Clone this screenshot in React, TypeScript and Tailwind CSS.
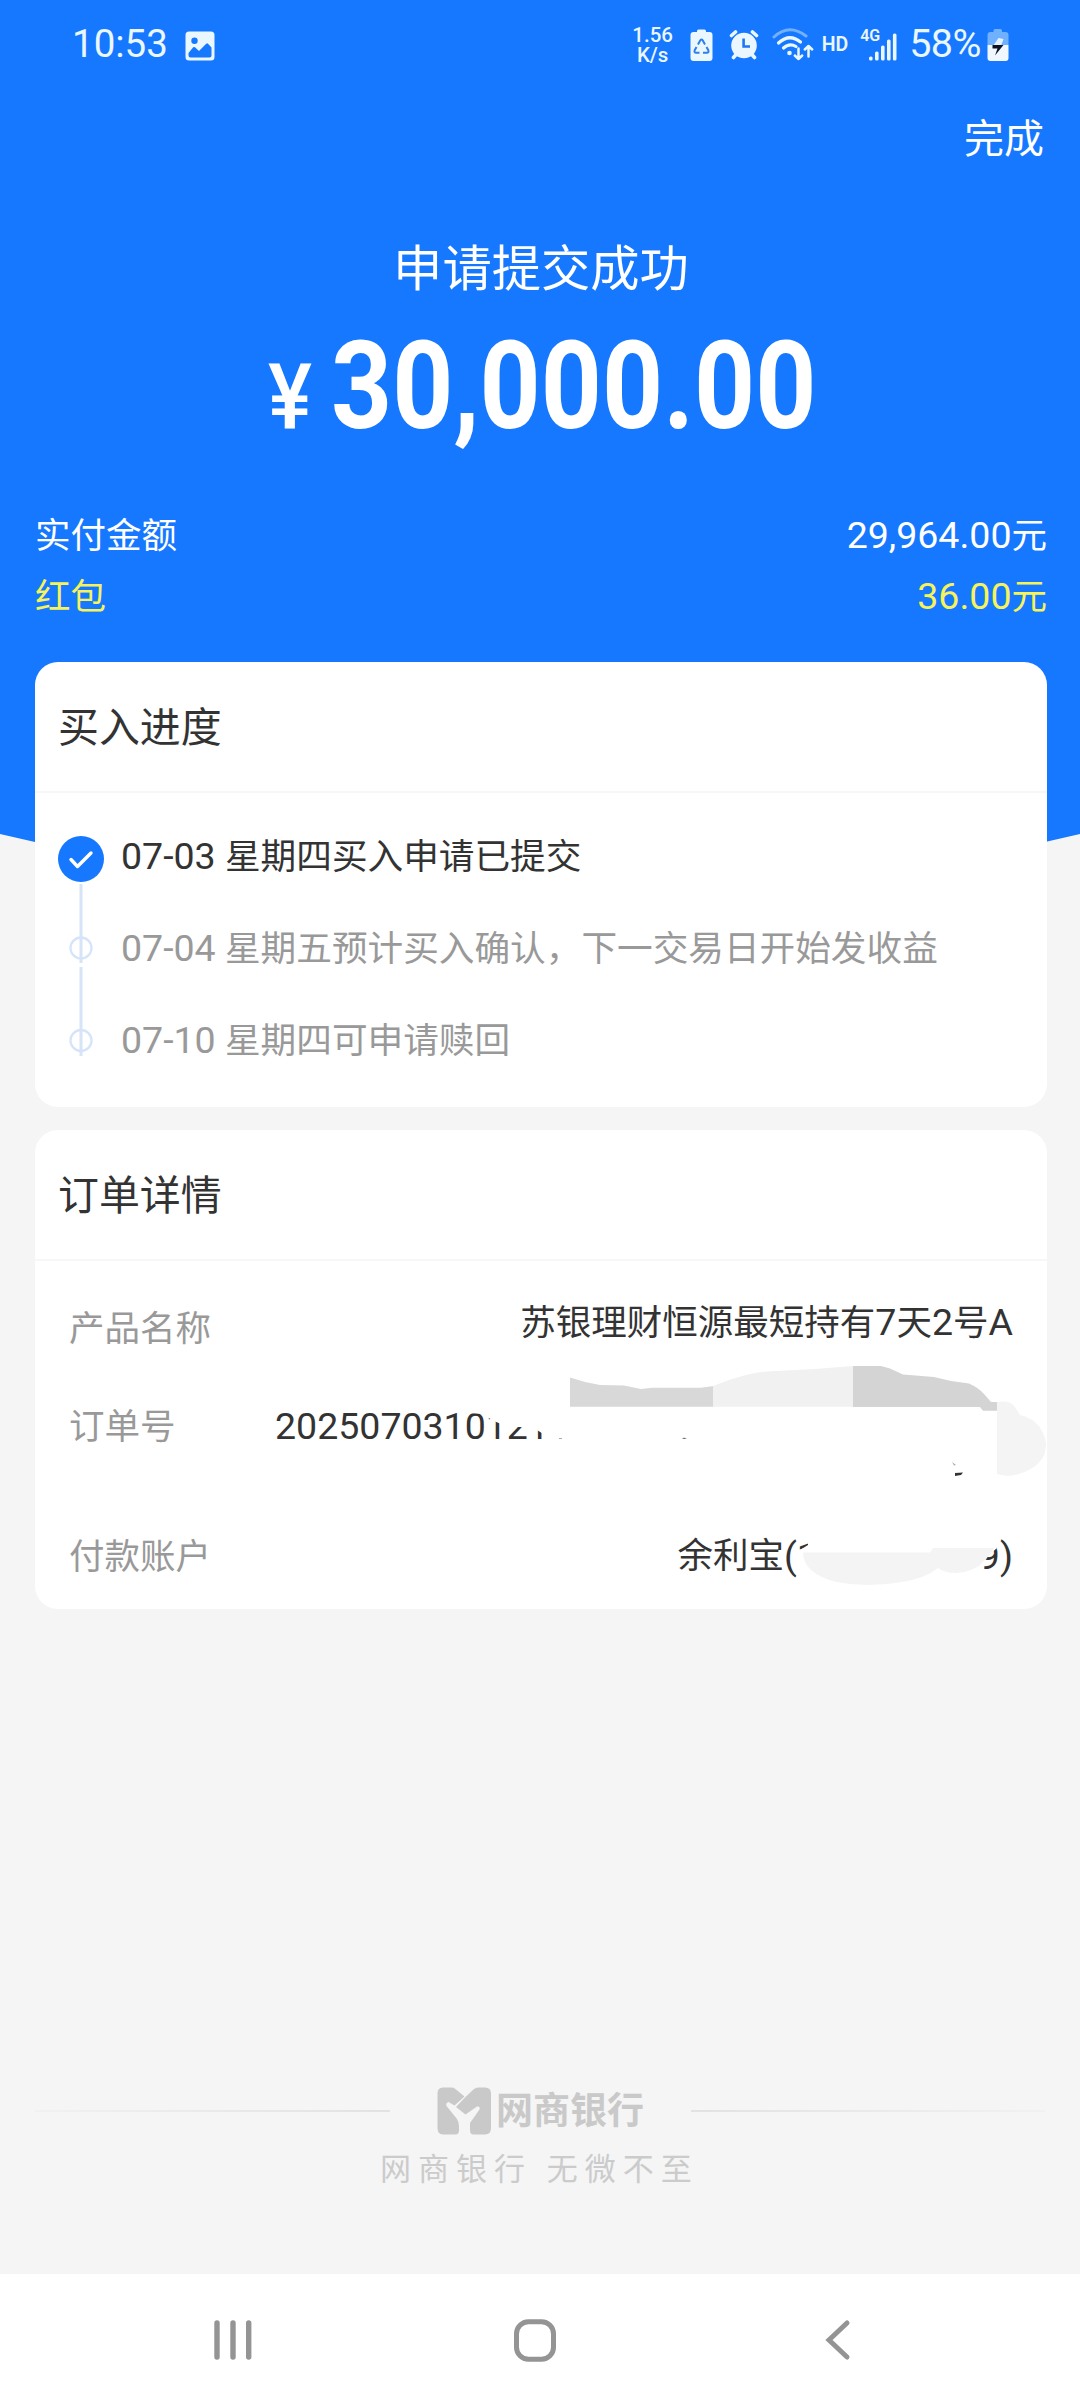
import type { ReactNode } from "react";

const latin = "font-['Roboto','Noto_Sans_CJK_SC',sans-serif]";

function ImageIcon() {
  return (
    <svg className="h-[30px] w-[30px]" viewBox="0 0 30 30">
      <path fillRule="evenodd" fill="#eaf7ff" d="M4 .5h22a3.5 3.5 0 0 1 3.5 3.5v22a3.5 3.5 0 0 1-3.5 3.5H4A3.5 3.5 0 0 1 .5 26V4A3.5 3.5 0 0 1 4 .5ZM9.500 6.500a3.200 3.200 0 1 0 0 6.400 3.200 3.200 0 0 0 0-6.400ZM3.500 22v2.500q0 2 2 2h19q2 0 2-2V16.500l-3.500-3.800q-.9-.9-1.800 0l-7.200 7.200-4-3.600q-.9-.8-1.800 0Z" />
    </svg>
  );
}

function RecycleBattery() {
  return (
    <svg className="h-[33px] w-[23px]" viewBox="0 0 23 33">
      <path fill="#eaf7ff" d="M7 3V2Q7 .5 8.500.5h6Q16 .5 16 2v1h3.500Q22.500 3 22.500 6v23q0 3-3 3h-16q-3 0-3-3V6q0-3 3-3Z" />
      <g fill="none" stroke="#2f7fe8" strokeWidth="2">
        <path d="M8 15.500 10.300 11.300q1.200-1.600 2.400 0L15 15.500" />
        <path d="M6.500 18 4.700 21.200q-.8 2.600 1.500 2.600H9.500" />
        <path d="M16.500 18l1.800 3.200q.8 2.600-1.500 2.600H13" />
      </g>
    </svg>
  );
}

function AlarmIcon() {
  return (
    <svg className="h-[31px] w-[30px]" viewBox="0 0 30 31">
      <g stroke="#eaf7ff" strokeWidth="3.600" strokeLinecap="round">
        <path d="M2.500 6.500 6.500 3M27.500 6.500 23.500 3M7.500 25 4.500 28.500M22.500 25l3 3.500" />
      </g>
      <circle cx="15" cy="16.500" r="12.800" fill="#eaf7ff" />
      <path d="M14.600 9.500v8h6.400" fill="none" stroke="#1f76f5" strokeWidth="2.600" />
    </svg>
  );
}

function WifiIcon() {
  return (
    <svg className="h-[34px] w-[42px]" viewBox="0 0 42 34" fill="none" strokeLinecap="round">
      <path d="M2 9Q17-5 34 8" stroke="#73b0fc" strokeWidth="3" />
      <path d="M6.500 15Q17.500 5 28.500 14" stroke="#eaf7ff" strokeWidth="3.200" />
      <path d="M11.500 20Q17.500 14.500 24 18.500" stroke="#eaf7ff" strokeWidth="3.200" />
      <circle cx="17.500" cy="25" r="2.300" fill="#eaf7ff" />
      <path d="M26.500 20.500V31M22.800 27.500l3.700 3.500 3.700-3.500M36.500 28.500V18M32.800 21.500l3.700-3.500 3.700 3.500" stroke="#eaf7ff" strokeWidth="2.500" strokeLinejoin="round" />
    </svg>
  );
}

function SignalIcon() {
  return (
    <svg className="h-[28px] w-[28px]" viewBox="0 0 28 28" fill="#eaf7ff">
      <rect x="0" y="23.500" width="3.600" height="4" rx="1.500" />
      <rect x="6" y="18.500" width="3.600" height="9" rx="1.500" />
      <rect x="12" y="12.500" width="3.600" height="15" rx="1.500" />
      <rect x="18" y="6.500" width="3.600" height="21" rx="1.500" />
      <rect x="23.900" y=".5" width="3.600" height="27" rx="1.500" />
    </svg>
  );
}

function BatteryIcon() {
  return (
    <svg className="h-[34px] w-[22px]" viewBox="0 0 22 34">
      <path fill="#6fb0ff" d="M6.500 4V2.500Q6.500 1 8 1h5.500Q15 1 15 2.500V4h3.500Q21.500 4 21.500 7v10H.5V7Q.5 4 3.500 4Z" />
      <path fill="#f1f7ff" d="M.5 17h21v13q0 3-3 3h-15q-3 0-3-3Z" />
      <path fill="#e4f1ff" d="m11.500 10-5.500 8h8l2.500-7Z" />
      <path fill="#0c1424" d="M5.500 17h11L8 27.500l2.500-7h-5Z" />
    </svg>
  );
}

function StatusBar() {
  return (
    <div className="flex h-[90px] items-start pl-[72px] pr-[71px] text-[#eaf7ff]">
      <span className="mt-[21px] w-[98px] text-[38.500px] leading-[46px]">10:53</span>
      <span className="ml-[15px] mt-[31px]"><ImageIcon /></span>
      <div className="ml-auto flex items-start">
        <div className="mt-[25px] flex w-[42px] flex-col items-center text-[20.500px] font-medium leading-[20px]">
          <span>1.56</span>
          <span>K/s</span>
        </div>
        <span className="ml-[16px] mt-[29px]"><RecycleBattery /></span>
        <span className="ml-[16px] mt-[29px]"><AlarmIcon /></span>
        <span className="ml-[13px] mt-[28px]"><WifiIcon /></span>
        <span className="ml-[8px] mt-[33px] text-[19.500px] font-semibold leading-[23px]">HD</span>
        <div className="relative ml-[21px] mt-[33px]">
          <SignalIcon />
          <span className="absolute -left-[9px] -top-[7px] text-[16px] font-semibold leading-[20px]">4G</span>
        </div>
        <span className="ml-[12px] mt-[21px] text-[39.500px] leading-[46px] tracking-[-0.500px]">58%</span>
        <span className="ml-[6px] mt-[28px]"><BatteryIcon /></span>
      </div>
    </div>
  );
}

function Num({ children }: { children: ReactNode }) {
  return <span className="text-[37.500px]">{children}</span>;
}

function Card({ title, className, children }: { title: string; className: string; children: ReactNode }) {
  return (
    <section className={"relative rounded-[23px] bg-white " + className}>
      <h2 className="flex h-[131px] items-center border-b-2 border-[#f7f7f7] pl-[23px] text-[40.900px] text-[#333]">
        <span className="pt-[3px] leading-[50px]">{title}</span>
      </h2>
      {children}
    </section>
  );
}

function Timeline() {
  return (
    <svg className="mt-[43px] h-[224px] w-[50px]" viewBox="0 0 50 224" fill="none">
      <circle cx="25" cy="23" r="23" fill="#1677ff" />
      <path d="m15 23.500 6.500 7L35 17" stroke="#fff" strokeWidth="3.400" strokeLinecap="round" strokeLinejoin="round" />
      <path d="M25 48v79M25 131v89" stroke="#d6e4f8" strokeWidth="3" />
      <circle cx="25" cy="112" r="10.500" stroke="#d6e4fb" strokeWidth="2.300" />
      <circle cx="25" cy="204.500" r="10.500" stroke="#d6e4fb" strokeWidth="2.300" />
    </svg>
  );
}

function Redaction() {
  return (
    <svg className="pointer-events-none absolute left-0 top-0 h-[479px] w-[1012px]" viewBox="35 1130 1012 479">
      <path fill="#fff" d="M466 1409 470 1413 482 1414 487 1417 494 1421 501 1424 505 1427 520 1427 537 1430 548 1437 548 1445 1000 1445V1408Z" />
      <path fill="#d8d8d8" d="M570 1377.500 585 1382 600 1385 624 1385.500 641 1389 652 1387.700 701 1387.700 713.500 1386V1406.700H570Z" />
      <path fill="#f1f1f1" d="M713 1386Q730 1379 746 1375T781 1370.700L815 1369 853 1366V1406.700H713Z" />
      <path fill="#d4d4d4" d="M853 1366H881L890 1368.500 903 1374.500 934 1377 951 1381 969 1383.500Q979 1388 984 1394L991 1402H997V1410.700H983L980 1407H853Z" />
      <path fill="#f4f4f4" d="M997 1402Q1010 1400 1015 1407L1020 1415Q1042 1420 1046 1443 1047 1464 1022 1473 1008 1478 997 1474Z" />
      <path fill="#333" d="M955 1473 963 1472.500 961 1475 955 1476Z" />
      <path fill="#777" d="M682 1439 684 1437.500 687 1439Z" />
      <path fill="#aaa" d="m952 1462 4 3-2 .5ZM559 1438h3v1h-3Z" />
      <path fill="#fff" d="M800 1550 808 1545V1536H990L997 1548 988 1556 984 1562 976 1569 800 1575Z" />
      <path fill="#f4f4f4" d="M803 1552.500H930L933 1548H994Q991 1554 984 1561 976 1571 957 1573 944 1573 938 1568 926 1578 902 1582 867 1588 836 1582 803 1573 803 1552.500Z" />
    </svg>
  );
}

function BankLogo() {
  return (
    <svg className="h-[48px] w-[55px]" viewBox="0 0 55 48">
      <path fill="#c9c9c9" d="M6 .5H15Q17 .5 19 2.500L27.500 9.500 17.500 18.500 11.500 15Q8.500 16 9.500 19L20 32Q22 35 22 39V43Q22 47.500 18.500 47.500H6Q.5 47.500.5 41V6.500Q.5.5 6 .5Z" />
      <path fill="#c9c9c9" d="M29 9.500 37 2Q39 .5 41 .5H48Q54 .5 54 6.500V41Q54 47.500 48 47.500H36.500Q33 47.500 33 43V36L42.500 22.500Q43.500 19 40 19.500L28.500 27.500 19 20Z" />
    </svg>
  );
}

export default function App() {
  return (
    <div className={"relative isolate flex h-[2400px] w-[1080px] flex-col overflow-hidden bg-[#f5f5f5] " + latin}>
      <div className="absolute inset-x-0 top-0 -z-10 h-[880px] bg-[#1677ff] [clip-path:polygon(0_0,100%_0,100%_834px,1045px_842px,540px_880px,35px_842px,0_834px)]" />
      <StatusBar />
      <div className="flex h-[98px] justify-end pr-[36px] pt-[22px] text-[40px] leading-[56px] text-white">完成</div>
      <div className="flex h-[142px] flex-col items-center text-white">
        <h1 className="ml-[2px] mt-[45px] text-[49.300px] leading-[72px]">申请提交成功</h1>
      </div>
      <div className="flex h-[166px] items-baseline pl-[268px] text-white">
        <span className="inline-block w-[63px] origin-left scale-x-[0.920] text-[90px] font-medium leading-[126px]">¥</span>
        <span className="inline-block origin-left scale-x-[0.867] whitespace-nowrap text-[123px] font-bold leading-[112px]">30,000.00</span>
      </div>
      <dl className="flex h-[166px] flex-col pl-[35px] pr-[33px] pt-[9px] text-[35.500px] text-white">
        <div className="flex h-[61px] items-center justify-between leading-[60px]">
          <dt>实付金额</dt>
          <dd><Num>29,964.00</Num>元</dd>
        </div>
        <div className="flex h-[61px] items-center justify-between leading-[60px] text-[#f7f35a]">
          <dt>红包</dt>
          <dd><Num>36.00</Num>元</dd>
        </div>
      </dl>

      <main className="flex flex-col gap-[23px] px-[35px] pr-[33px]">
        <Card title="买入进度" className="h-[445px]">
          <div className="flex pl-[21px]">
            <Timeline />
            <ol className="ml-[15px] mt-[17px] whitespace-nowrap text-[35.650px] leading-[92px] text-[#999]">
              <li className="h-[92px] text-[#333]"><Num>07-03 </Num>星期四买入申请已提交</li>
              <li className="h-[92px]"><Num>07-04 </Num>星期五预计买入确认，下一交易日开始发收益</li>
              <li className="h-[92px]"><Num>07-10 </Num>星期四可申请赎回</li>
            </ol>
          </div>
        </Card>
        <Card title="订单详情" className="h-[479px]">
          <dl className="pl-[34px] pr-[34px] text-[35.500px] leading-[60px] text-[#333]">
            <div className="flex h-[136px] justify-between pt-[31px]">
              <dt className="mt-[7px] text-[#999]">产品名称</dt>
              <dd>苏银理财恒源最短持有<Num>7</Num>天<Num>2</Num>号<Num>A</Num></dd>
            </div>
            <div className="flex h-[130px]">
              <dt className="w-[206px] text-[#999]">订单号</dt>
              <dd className="-mt-px"><Num>2025070310121</Num></dd>
            </div>
            <div className="flex justify-between">
              <dt className="text-[#999]">付款账户</dt>
              <dd className="-mt-px flex">余利宝<Num>(1</Num><span className="w-[161px]" /><Num>9)</Num></dd>
            </div>
          </dl>
          <Redaction />
        </Card>
      </main>

      <footer className="mt-auto flex h-[189px] flex-col">
        <div className="flex h-[52px] items-center px-[35px]">
          <span className="h-[2px] w-[355px] bg-gradient-to-r from-[#f1f1f1] to-[#e2e2e2]" />
          <span className="ml-[47px]"><BankLogo /></span>
          <span className="ml-[4px] w-[195px] pt-[2px] text-[37px] font-bold leading-[48px] text-[#c9c9c9]">网商银行</span>
          <span className="h-[2px] flex-1 bg-gradient-to-r from-[#e2e2e2] to-[#f1f1f1]" />
        </div>
        <div className="mt-[9px] pl-[380px] text-[31px] leading-[48px] tracking-[7px] text-[#cbcbcb]">网商银行 无微不至</div>
      </footer>

      <nav className="flex h-[126px] items-start bg-white pt-[45px]">
        <svg className="ml-[213px] h-[42px] w-[40px]" viewBox="0 0 40 42" stroke="#949494" strokeWidth="5.400" strokeLinecap="round">
          <path d="M4 4v34M20 4v34M35.700 4v34" />
        </svg>
        <svg className="ml-[260px] h-[44px] w-[44px]" viewBox="0 0 44 44" fill="none" stroke="#949494" strokeWidth="5">
          <rect x="3.500" y="2.700" width="37" height="37.500" rx="12" />
        </svg>
        <svg className="ml-[267px] h-[42px] w-[28px]" viewBox="0 0 28 42" fill="none" stroke="#949494" strokeWidth="5" strokeLinecap="round">
          <path d="M23 4 5 21l18 17" />
        </svg>
      </nav>
    </div>
  );
}
